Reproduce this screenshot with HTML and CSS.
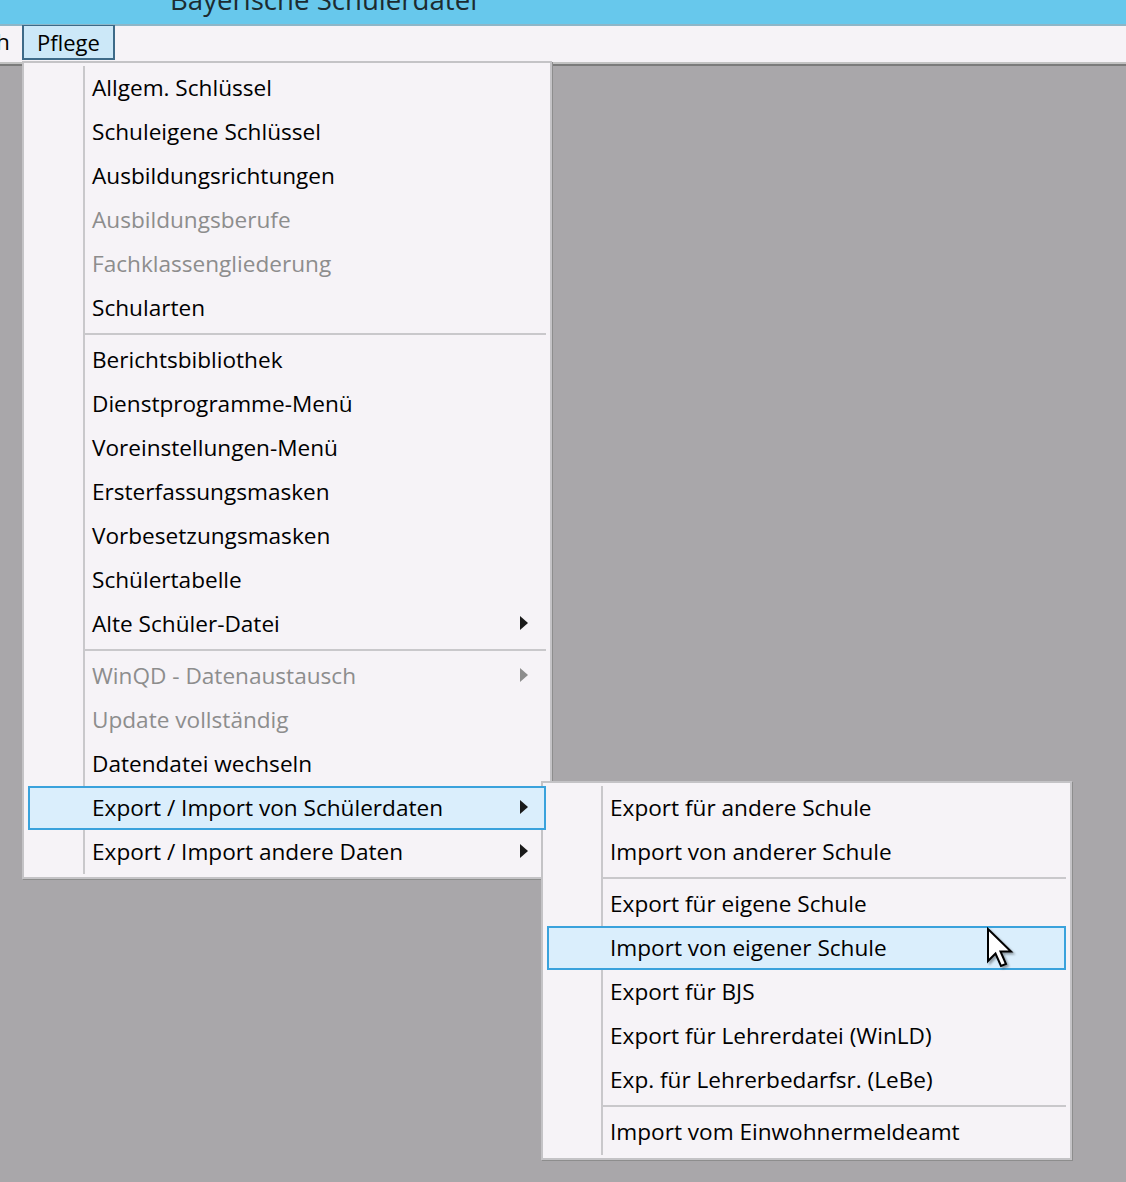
FILE: index.html
```html
<!DOCTYPE html>
<html lang="de">
<head>
  <meta charset="UTF-8">
  <title>Bayerische Schülerdatei</title>
  <link rel="stylesheet" href="styles.css">
</head>
<body>
  <div class="window">
    <div class="titlebar">
      <div class="titlebar__text">Bayerische Schülerdatei</div>
    </div>
    <div class="menubar">
      <div class="menubar__item menubar__item--cut">h</div>
      <div class="menubar__item menubar__item--open">Pflege</div>
    </div>
    <div class="workspace"></div>

    <!-- Pflege dropdown -->
    <div class="menu menu--main">
      <div class="menu-item">Allgem. Schlüssel</div>
      <div class="menu-item">Schuleigene Schlüssel</div>
      <div class="menu-item">Ausbildungsrichtungen</div>
      <div class="menu-item menu-item--disabled">Ausbildungsberufe</div>
      <div class="menu-item menu-item--disabled">Fachklassengliederung</div>
      <div class="menu-item">Schularten</div>
      <div class="menu-sep"></div>
      <div class="menu-item">Berichtsbibliothek</div>
      <div class="menu-item">Dienstprogramme-Menü</div>
      <div class="menu-item">Voreinstellungen-Menü</div>
      <div class="menu-item">Ersterfassungsmasken</div>
      <div class="menu-item">Vorbesetzungsmasken</div>
      <div class="menu-item">Schülertabelle</div>
      <div class="menu-item menu-item--sub">Alte Schüler-Datei</div>
      <div class="menu-sep"></div>
      <div class="menu-item menu-item--sub menu-item--disabled">WinQD - Datenaustausch</div>
      <div class="menu-item menu-item--disabled">Update vollständig</div>
      <div class="menu-item">Datendatei wechseln</div>
      <div class="menu-item menu-item--sub menu-item--active">Export / Import von Schülerdaten</div>
      <div class="menu-item menu-item--sub">Export / Import andere Daten</div>
    </div>

    <!-- Export / Import submenu -->
    <div class="menu menu--sub">
      <div class="menu-item">Export für andere Schule</div>
      <div class="menu-item">Import von anderer Schule</div>
      <div class="menu-sep"></div>
      <div class="menu-item">Export für eigene Schule</div>
      <div class="menu-item menu-item--active">Import von eigener Schule</div>
      <div class="menu-item">Export für BJS</div>
      <div class="menu-item">Export für Lehrerdatei (WinLD)</div>
      <div class="menu-item">Exp. für Lehrerbedarfsr. (LeBe)</div>
      <div class="menu-sep"></div>
      <div class="menu-item">Import vom Einwohnermeldeamt</div>
    </div>

    <svg class="cursor" width="30" height="46" viewBox="0 0 30 46">
      <polygon points="2,2 2,34 9.5,26.5 15,39 20,37 14.5,24.5 25,24.5" fill="#fff" stroke="#000" stroke-width="2" stroke-linejoin="miter"/>
    </svg>
  </div>
</body>
</html>
```

FILE: styles.css
```css
/* General styles */
html, body {
  margin: 0;
  padding: 0;
}

body {
  background: #a9a7aa;
  font-family: "Open Sans", "Noto Sans", sans-serif;
  font-size: 22.6px;
  color: #000;
}

.window {
  width: 1126px;
  height: 1182px;
  overflow: hidden;
}

.titlebar {
  height: 24px;
  background: #67c8ec;
  border-bottom: 2px solid #8eb6c8;
  overflow: hidden;
}

.titlebar__text {
  padding-left: 170px;
  margin-top: -18px;
  font-size: 27.6px;
  line-height: 34px;
  color: #1c2b30;
}

.menubar {
  display: flex;
  height: 36px;
  background: #f6f3f7;
  border-bottom: 2px solid #c2c2c2;
  box-shadow: 0 2px 0 #7b7b7b;
}

.menubar__item {
  height: 34px;
  line-height: 32px;
  box-sizing: border-box;
  padding: 0 13px;
}

.menubar__item--cut {
  margin-left: -4px;
  padding: 0 12px 0 0;
  width: 26px;
}

.menubar__item--open {
  background: #cce8f8;
  border: 2px solid #3d6a88;
  border-top-width: 1px;
  margin-top: -1px;
  height: 35px;
  width: 93px;
  font-size: 22px;
}

/* Dropdown menus */
.menu {
  position: absolute;
  box-sizing: border-box;
  background: #f6f3f7;
  border: 2px solid #c4c3c6;
  box-shadow: 1px 1px 0 #8d8d8d;
  padding: 3px 4px;
}

.menu::before {
  content: "";
  position: absolute;
  left: 59px;
  top: 3px;
  bottom: 3px;
  width: 2px;
  background: #c9c8cb;
}

.menu--main {
  left: 22px;
  top: 61px;
  width: 530px;
  height: 818px;
}

.menu--sub {
  left: 541px;
  top: 781px;
  width: 531px;
  height: 379px;
}

.menu--sub::before {
  left: 58px;
}

.menu-item {
  position: relative;
  display: flex;
  align-items: center;
  height: 44px;
  box-sizing: border-box;
  border: 2px solid transparent;
  padding-left: 62px;
  padding-bottom: 2px;
  white-space: nowrap;
}

.menu--sub .menu-item {
  padding-left: 61px;
}

.menu-item--disabled {
  color: #8d8d8d;
}

.menu-item--sub::after {
  content: "";
  margin-left: auto;
  margin-right: 16px;
  border-left: 8px solid #1a1a1a;
  border-top: 7px solid transparent;
  border-bottom: 7px solid transparent;
}

.menu-item--sub.menu-item--disabled::after {
  border-left-color: #8d8d8d;
}

.menu-item--active {
  background: #daeefc;
  border-color: #3aa2dc;
  z-index: 1;
}

.menu-sep {
  height: 8px;
  display: flex;
  align-items: center;
}

.menu-sep::before {
  content: "";
  flex: 1;
  height: 2px;
  margin-left: 55px;
  background: #c9c8cb;
}

.cursor {
  position: absolute;
  left: 986px;
  top: 927px;
  z-index: 5;
  filter: drop-shadow(2px 2px 1px rgba(0,0,0,.35));
}
```
